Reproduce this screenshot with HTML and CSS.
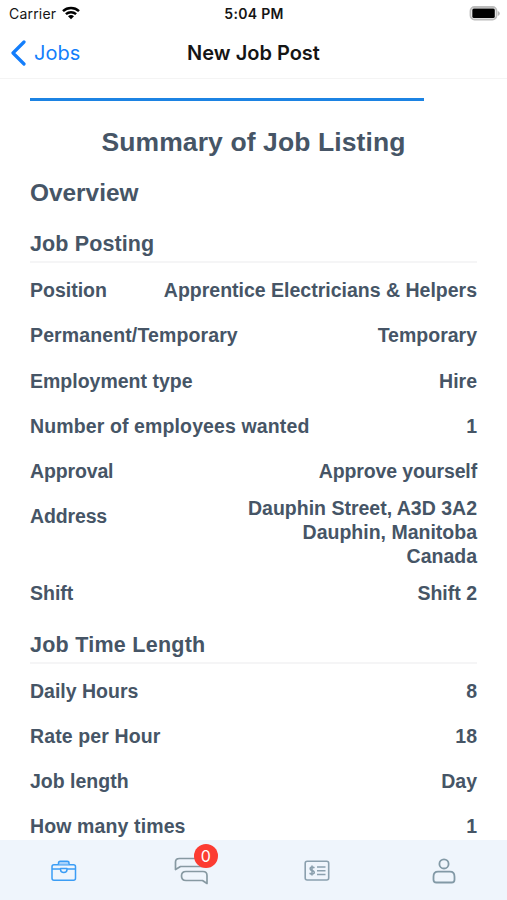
FILE: index.html
```html
<!DOCTYPE html>
<html lang="en">
<head>
<meta charset="utf-8">
<title>New Job Post</title>
<link rel="stylesheet" href="styles.css">
</head>
<body>
<div class="phone">
  <header class="top">
    <div class="status">
      <div class="carrier"><span>Carrier</span>
        <svg class="wifi" width="18" height="14" viewBox="0 0 18 14" fill="none" stroke="#000" stroke-width="2.5"><path d="M1 5.1C5.5.9 12.500.9 17 5.100M3.900 8.100C6.800 5.500 11.200 5.500 14.100 8.100"/><path d="M6 10.200Q9 7.900 12 10.200L9 13.300Z" fill="#000" stroke="none"/></svg>
      </div>
      <div class="time">5:04 PM</div>
      <div class="power"><svg width="31" height="15" viewBox="0 0 31 15"><rect x="1.500" y="1" width="26" height="12.500" rx="4" fill="#fff" stroke="#bcbcbc" stroke-width="1.800"/><rect x="3.300" y="2.600" width="22.500" height="9.300" rx="1.500" fill="#000"/><path d="M28.800 5v5q2-.8 2-2.500T28.800 5Z" fill="#b5b5b5"/></svg></div>
    </div>
    <nav class="nav">
      <a class="back"><svg width="16" height="26" viewBox="0 0 16 26" fill="none" stroke="#147efb" stroke-width="3.200" stroke-linecap="round" stroke-linejoin="round"><path d="M14 2 3 13l11 11"/></svg><span>Jobs</span></a>
      <h1>New Job Post</h1>
    </nav>
  </header>
  <main class="content">
    <div class="progress"></div>
    <h2 class="title">Summary of Job Listing</h2>
    <h3 class="overview">Overview</h3>
    <h4>Job Posting</h4>
    <dl>
      <div class="row"><dt>Position</dt><dd>Apprentice Electricians &amp; Helpers</dd></div>
      <div class="row"><dt class="wide">Permanent/Temporary</dt><dd>Temporary</dd></div>
      <div class="row"><dt>Employment type</dt><dd>Hire</dd></div>
      <div class="row"><dt class="wide">Number of employees wanted</dt><dd>1</dd></div>
      <div class="row"><dt class="narrow">Approval</dt><dd class="narrow">Approve yourself</dd></div>
      <div class="row address"><dt class="narrow">Address</dt><dd>Dauphin Street, A3D 3A2<br>Dauphin, Manitoba<br>Canada</dd></div>
      <div class="row"><dt>Shift</dt><dd>Shift 2</dd></div>
    </dl>
    <h4 class="second">Job Time Length</h4>
    <dl>
      <div class="row"><dt>Daily Hours</dt><dd>8</dd></div>
      <div class="row"><dt class="wide">Rate per Hour</dt><dd>18</dd></div>
      <div class="row"><dt>Job length</dt><dd>Day</dd></div>
      <div class="row"><dt class="wide">How many times</dt><dd>1</dd></div>
    </dl>
  </main>
  <footer class="tabs">
    <a class="tab active"><svg width="26" height="22" viewBox="0 0 26 22" fill="none" stroke="#3b9df5" stroke-width="1.500" stroke-linejoin="round"><rect x="1" y="4.700" width="23.500" height="15.500" rx="2"/><path d="M7.500 4.500V3q0-1.700 1.700-1.700h7Q18 1.300 18 3v1.500" fill="#a9d2fa"/><path d="M1 9h8.500M16 9h8.500M9.500 8.500h6.500v1q0 3-3.200 3t-3.300-3Z"/></svg></a>
    <a class="tab messages"><svg width="34" height="28" viewBox="0 0 34 28" fill="none" stroke="#8799a2" stroke-width="1.700" stroke-linejoin="round"><path d="M32 9.500H6.500L1.500 12.500V5q0-3.500 4-3.500H28q4 0 4 4Z"/><path d="M12 14.500H29q4 0 4 4V26.500l-4.500-3H12q-4.500 0-4.500-4.500T12 14.500Z"/></svg><span class="badge">0</span></a>
    <a class="tab"><svg width="26" height="22" viewBox="0 0 26 22" fill="none" stroke="#8ba0ae" stroke-width="1.600"><rect x="1.200" y="1.300" width="23.500" height="18.700" rx="2"/><path d="M13 7h8.500M13 10.800h8.500M13 14.500h8.500"/><path d="M10.500 7.800Q8 6.500 6.500 7.600 5.500 9.500 8 10.500q3 .8 2 2.800-1.500 1.500-4.500 0M8 5.500v10"/></svg></a>
    <a class="tab"><svg width="24" height="26" viewBox="0 0 24 26" fill="none" stroke="#8299a6" stroke-width="1.800"><circle cx="12" cy="5.900" r="4.600"/><path d="M6 13.700h12q4.500 0 4.500 5v3q0 2.800-2.800 2.800H4.300q-2.800 0-2.800-2.800v-3q0-5 4.500-5Z"/></svg></a>
  </footer>
</div>
</body>
</html>
```

FILE: styles.css
```css
* { box-sizing: border-box; }
body, h1, h2, h3, h4, dl, dd { margin: 0; }
body { background: #fff; overflow: hidden; font-family: "Liberation Sans", Arial, sans-serif; color: #465566; }
.phone { height: 900px; display: flex; flex-direction: column; }
.top { height: 79px; flex: none; border-bottom: 1px solid #f4f4f4; font-family: Inter, sans-serif; color: #151515; }
.status { height: 27px; display: grid; grid-template-columns: 1fr auto 1fr; align-items: center; padding: 0 7px 0 9px; font-size: 14px; }
.carrier { display: flex; align-items: center; gap: 6px; letter-spacing: .2px; }
.wifi { margin-top: -2px; }
.time { margin-right: 1px; font-weight: 600; letter-spacing: .3px; }
.power { display: flex; justify-content: flex-end; }
.nav { height: 51px; display: grid; grid-template-columns: 1fr auto 1fr; align-items: center; padding: 0 10px; }
.back { display: flex; align-items: center; gap: 8px; color: #147efb; font-size: 20px; }
h1 { font-size: 20px; font-weight: 600; }
.content { flex: 1; min-height: 0; overflow: hidden; padding: 19px 30px 0; }
.progress { height: 3px; width: 394px; background: #1c83e3; }
.title { margin-top: 21px; height: 40px; line-height: 40px; text-align: center; font-size: 26.500px; letter-spacing: .1px; }
.overview { height: 62px; line-height: 62px; font-size: 24.400px; }
h4 { height: 39px; line-height: 40px; border-bottom: 2px solid #f5f5f6; font-size: 21.500px; letter-spacing: .12px; }
.second { margin-top: 8.500px; letter-spacing: .26px; }
dl { padding-top: 5px; }
.row { height: 45.250px; display: flex; justify-content: space-between; font-size: 19.500px; font-weight: 700; line-height: 45.200px; white-space: nowrap; }
.wide { letter-spacing: .12px; }
.narrow { letter-spacing: -.14px; }
.address { height: 76.700px; }
.address dd { text-align: right; line-height: 23.700px; padding-top: 3px; }
.tabs { height: 60px; flex: none; display: grid; grid-template-columns: repeat(4, 1fr); background: #eff5fc; }
.tab { position: relative; display: flex; align-items: center; justify-content: center; padding-top: 1px; }
.active { padding-left: 2px; }
.messages { padding-left: 1px; }
.badge { position: absolute; left: 67px; top: 4px; width: 24px; height: 24px; border-radius: 50%; background: #fc3c32; color: #fff; font: 16px/24px Inter, sans-serif; text-align: center; }
```
